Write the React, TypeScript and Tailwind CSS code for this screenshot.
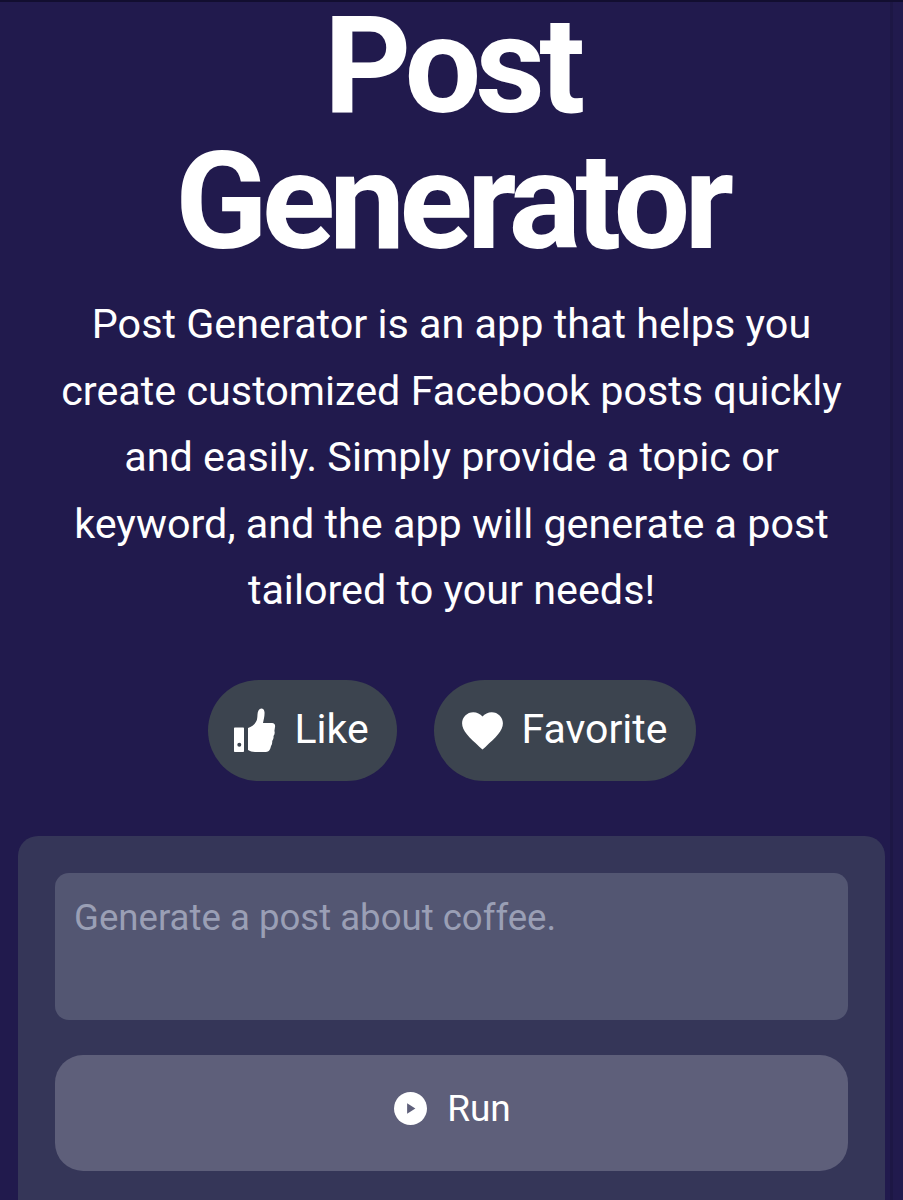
function ThumbIcon() {
  return (
    <svg viewBox="0 0 44 44" className="h-[44px] w-[44px]" fill="white">
      <path fillRule="evenodd" d="M1 20.500c0-.6.4-1 1-1h8c.6 0 1 .4 1 1V43c0 .6-.4 1-1 1H2c-.6 0-1-.4-1-1V20.500zM6.300 34.800a2 2 0 1 0 0 4 2 2 0 0 0 0-4z" />
      <path d="M15 20c4-1.500 8-4.500 9-8.500C24.800 8 24 5 25.500 2.500 27-.5 31-.5 31.500 4c.3 3.500-.7 7.500-1.500 11h9c2.500 0 3.500 2 3 4l-.6 4c.6 1.500.3 3.500-.9 5 .3 2-.2 3.500-1.300 5 .2 2-.2 3.500-1.200 5-.5 3-2 6-5 6H22c-3 0-5-.7-7-2V20z" />
    </svg>
  );
}

function HeartIcon() {
  return (
    <svg viewBox="0 0 24 24" className="h-[49px] w-[49px]" fill="white">
      <path d="M12 21.350l-1.450-1.320C5.400 15.360 2 12.280 2 8.500 2 5.420 4.420 3 7.500 3c1.740 0 3.410.81 4.500 2.090C13.090 3.810 14.760 3 16.500 3 19.580 3 22 5.420 22 8.500c0 3.780-3.400 6.860-8.550 11.540L12 21.350z" />
    </svg>
  );
}

function PlayCircle() {
  return (
    <svg viewBox="0 0 34 34" className="h-[33px] w-[33px]">
      <circle cx="17" cy="17" r="17" fill="white" />
      <path d="M13.500 11.500l8.500 5.500-8.500 5.500z" fill="#5e5f7a" />
    </svg>
  );
}

function PillButton({ icon, label, className }: { icon: React.ReactNode; label: string; className: string }) {
  return (
    <button className={`flex h-[101px] items-center rounded-full bg-[#3c444f] text-[41px] text-white ${className}`}>
      {icon}
      <span>{label}</span>
    </button>
  );
}

export default function App() {
  return (
    <div className="relative h-[1200px] overflow-hidden bg-[#211a4d] font-['Roboto',sans-serif]">
      <div className="h-[2px] bg-[#120e30]" />
      <div className="flex flex-col items-center px-[18px]">
        <h1 className="mt-[-4px] mb-[-1px] w-[640px] text-center text-[136px] leading-[136px] font-[720] tracking-[-0.044em] text-white">
          Post Generator
        </h1>
        <p className="mt-[22px] w-[800px] text-center text-[41.300px] leading-[66.500px] text-white">
          Post Generator is an app that helps you create customized Facebook posts quickly and easily. Simply provide a topic or keyword, and the app will generate a post tailored to your needs!
        </p>
        <div className="mt-[56px] flex gap-[37px]">
          <PillButton
            className="w-[189px] gap-[18px] pl-[25px]"
            icon={<ThumbIcon />}
            label="Like"
          />
          <PillButton
            className="w-[262px] gap-[15px] pl-[24px]"
            icon={<HeartIcon />}
            label="Favorite"
          />
        </div>
        <div className="mt-[55px] flex h-[400px] w-full flex-col gap-[35px] rounded-[20px] bg-[#353658] p-[37px]">
          <div className="h-[147px] rounded-[14px] bg-[#535672] px-[19px] py-[21px] text-[36.600px] leading-[48px] text-[#9a9fb5]">
            Generate a post about coffee.
          </div>
          <button className="flex h-[116px] items-center justify-center gap-[20px] rounded-[28px] bg-[#5e5f7a] pb-[8px] pl-[2px] text-[37px] text-white">
            <PlayCircle />
            <span>Run</span>
          </button>
        </div>
      </div>
      <div className="absolute top-[2px] right-[10px] bottom-0 w-[3px] bg-[#1d1745]" />
    </div>
  );
}
